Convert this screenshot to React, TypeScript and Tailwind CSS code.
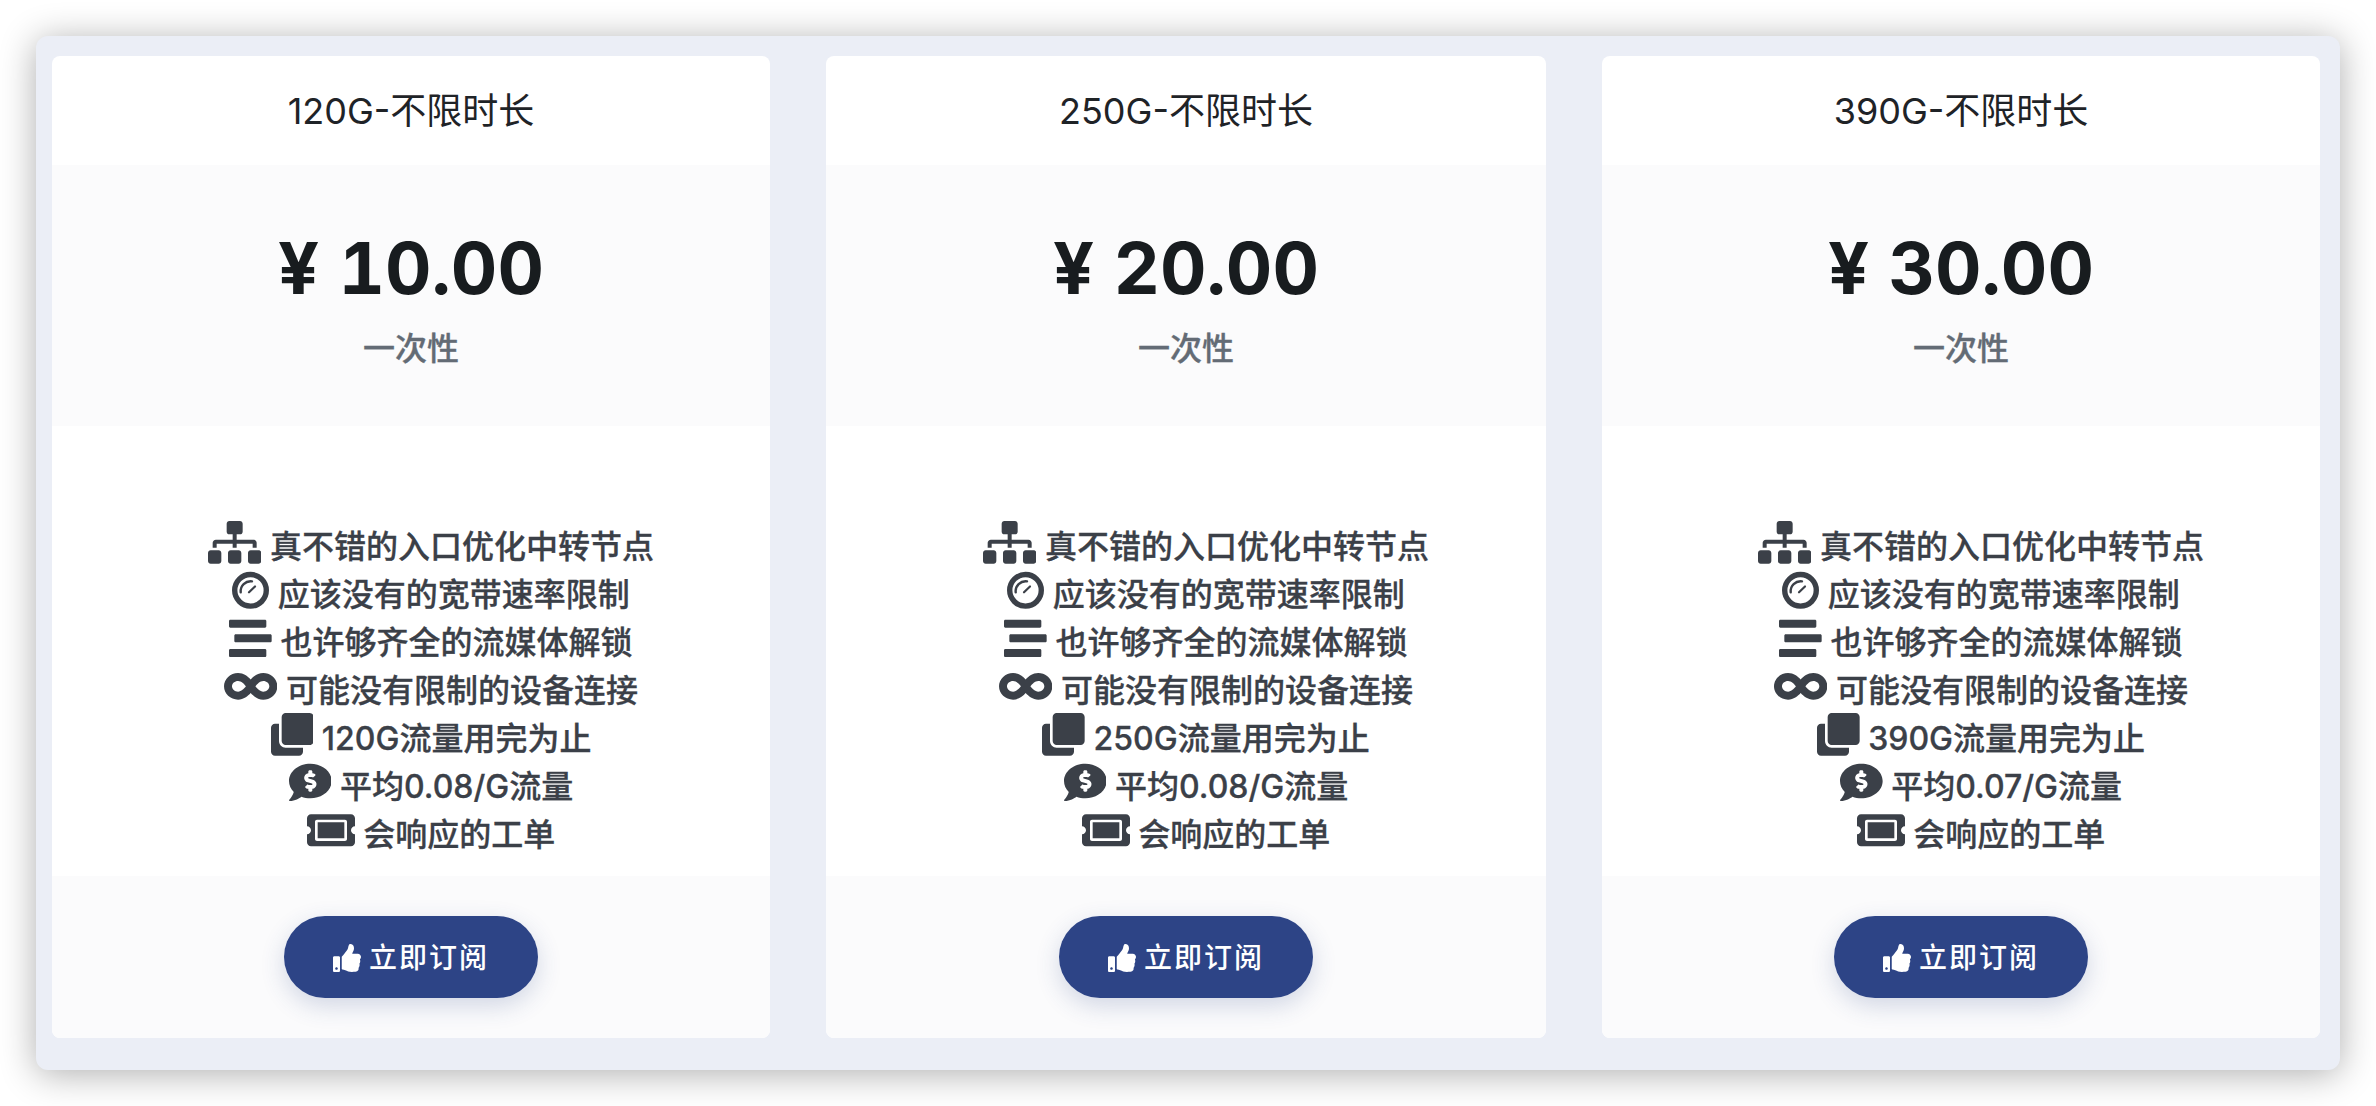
import { FaClone, FaCommentDollar, FaInfinity, FaSitemap, FaStream, FaThumbsUp, FaTicketAlt } from 'react-icons/fa';

const plans = [
  { title: '120G-不限时长', price: '¥ 10.00', traffic: '120G流量用完为止', rate: '平均0.08/G流量' },
  { title: '250G-不限时长', price: '¥ 20.00', traffic: '250G流量用完为止', rate: '平均0.08/G流量' },
  { title: '390G-不限时长', price: '¥ 30.00', traffic: '390G流量用完为止', rate: '平均0.07/G流量' },
];

function Gauge({ className }: { className?: string }) {
  return (
    <svg className={className} viewBox="0 -2.83 37 42.67" fill="none" stroke="currentColor">
      <circle cx="18.5" cy="18.5" r="15.8" strokeWidth="5.4" />
      <path d="M8.7 20.5a10 10 0 0 1 11.3-11" strokeWidth="2.4" strokeLinecap="round" />
      <path d="M17 20.5l6-5.8" strokeWidth="2.2" strokeLinecap="round" />
    </svg>
  );
}

function Feature({ icon, text }: { icon: React.ReactNode; text: string }) {
  return (
    <div className="h-12 text-center leading-[48px]">
      {icon} {text}
    </div>
  );
}

function PlanCard({ title, price, traffic, rate }: (typeof plans)[number]) {
  const iconClass = 'inline size-[42.67px] align-[-5.5px]';

  return (
    <div className="overflow-hidden rounded-lg bg-white">
      <div className="flex h-[109px] items-center justify-center text-[36px] text-[#1f2327]">{title}</div>

      <div className="flex h-[261px] flex-col items-center bg-[#fbfbfc] pt-[62px]">
        <div className="text-[72px] leading-[82px] font-bold text-[#181c1f] tabular-nums">{price}</div>
        <div className="mt-[20px] text-[32px] leading-[40px] font-medium text-[#636b75] [-webkit-text-stroke:0.3px_#636b75]">一次性</div>
      </div>

      <div className="h-[450px] pt-[95px] pl-10 text-[32px] font-medium text-[#3b4048] [-webkit-text-stroke:0.3px_#3b4048]">
        <Feature icon={<FaSitemap className="inline h-[42.67px] w-[53.33px] align-[-5.5px]" />} text="真不错的入口优化中转节点" />
        <Feature icon={<Gauge className="inline h-[42.67px] w-[37px] align-[-5.5px]" />} text="应该没有的宽带速率限制" />
        <Feature icon={<FaStream className={iconClass} />} text="也许够齐全的流媒体解锁" />
        <Feature icon={<FaInfinity className="inline h-[42.67px] w-[53.33px] align-[-5.5px]" />} text="可能没有限制的设备连接" />
        <Feature icon={<FaClone className={iconClass} />} text={traffic} />
        <Feature icon={<FaCommentDollar className={iconClass} />} text={rate} />
        <Feature icon={<FaTicketAlt className="inline h-[42.67px] w-[48px] align-[-5.5px]" />} text="会响应的工单" />
      </div>

      <div className="flex h-[162px] justify-center bg-[#fbfbfc] pt-10">
        <button className="flex h-[82px] w-[254px] items-center justify-center gap-2 rounded-full bg-[#2d4486] pt-0.5 text-[28px] font-medium tracking-[2px] text-white shadow-[0_8px_24px_rgba(45,68,134,0.2)]">
          <FaThumbsUp className="size-7" />
          立即订阅
        </button>
      </div>
    </div>
  );
}

export default function App() {
  return (
    <div className="h-[1106px] bg-white p-9 font-['Inter','Noto_Sans_CJK_SC',sans-serif]">
      <div className="grid h-[1034px] grid-cols-[718px_720px_718px] gap-14 rounded-xl bg-[#ebeef6] pt-5 pr-5 pb-8 pl-4 shadow-[0_4px_36px_rgba(0,0,0,0.32)]">
        {plans.map((plan) => (
          <PlanCard key={plan.title} {...plan} />
        ))}
      </div>
    </div>
  );
}
